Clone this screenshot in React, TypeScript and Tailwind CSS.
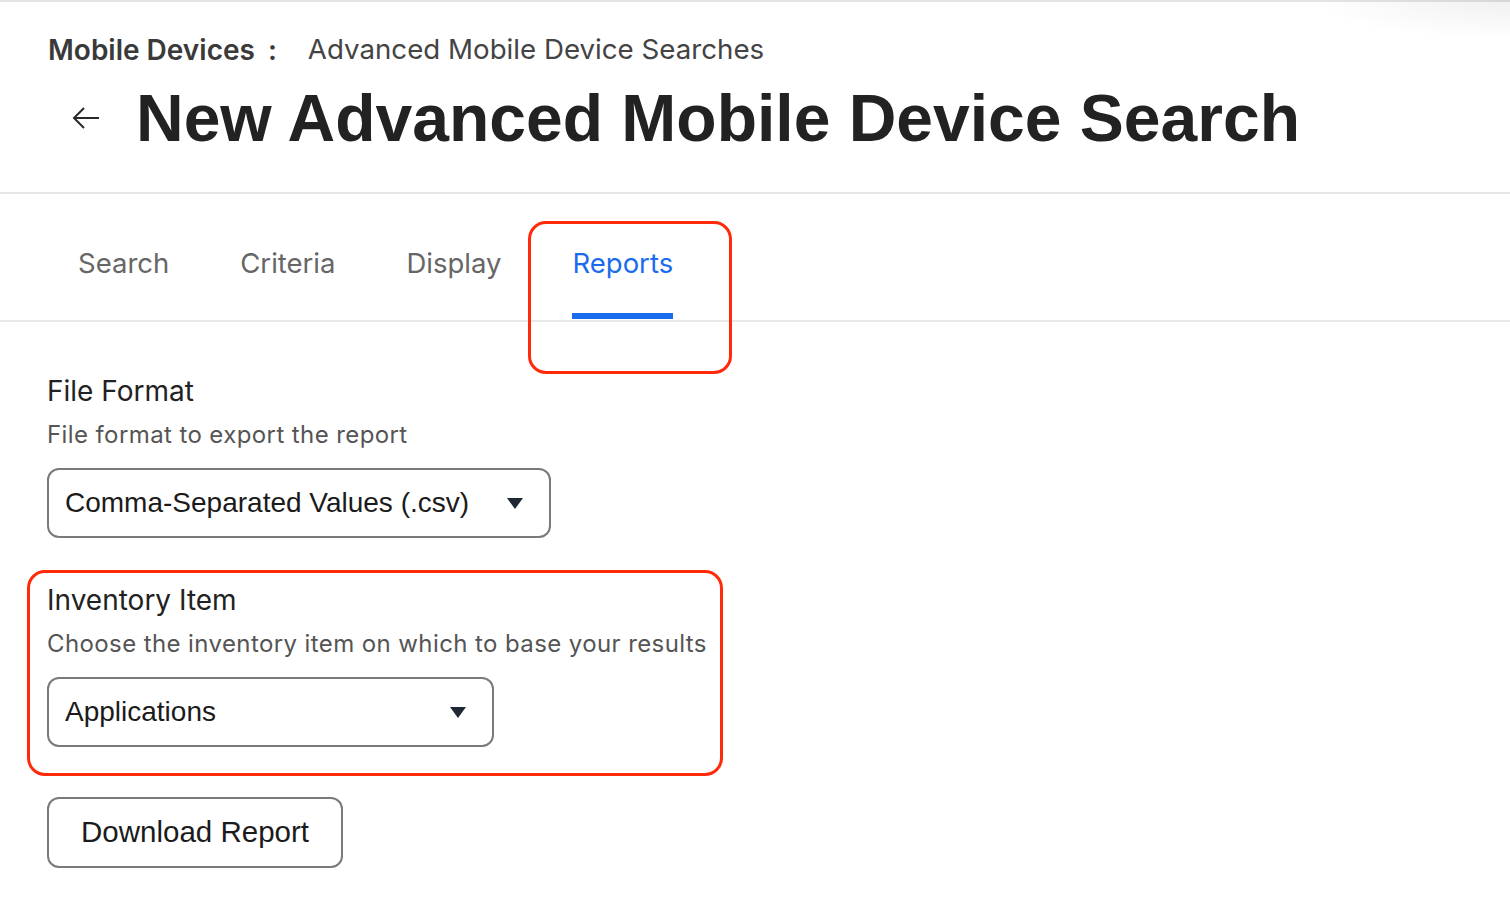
import React from "react";

const inter = "font-['Inter','Noto_Sans',sans-serif]";
const arial = "font-['Liberation_Sans',Arial,sans-serif]";

function Caret() {
  return (
    <svg width="16" height="11" viewBox="0 0 16 11" className="shrink-0">
      <polygon points="0,0 16,0 8,11" fill="#1f2733" />
    </svg>
  );
}

function Select({ value, width }: { value: string; width: string }) {
  return (
    <div
      className={`${width} h-[70px] rounded-[12px] border-2 border-[#7a7a7a] flex items-center justify-between pl-[16px] pr-[26px] bg-white`}
    >
      <span className={`${arial} text-[28px] text-[#1b1b1b]`}>{value}</span>
      <Caret />
    </div>
  );
}

export default function App() {
  return (
    <div className={`relative w-full min-h-[904px] bg-white ${inter} overflow-hidden`}>
      <div className="absolute top-0 right-0 w-[200px] h-[40px] bg-[radial-gradient(ellipse_at_top_right,rgba(0,0,0,0.06),rgba(0,0,0,0)_70%)] pointer-events-none" />
      {/* Header */}
      <div className="border-t-2 border-[#e3e3e3] border-b-2 border-b-[#e6e6e6] h-[194px]">
        <div className="pl-[48px] pt-[29px] flex items-center h-[38px] box-content text-[28px]">
          <span className="font-semibold text-[#3a3a3a]">Mobile Devices</span>
          <span className="ml-[13px] font-semibold text-[#3a3a3a]">:</span>
          <span className="ml-[31px] text-[27.7px] text-[#444]">Advanced Mobile Device Searches</span>
        </div>
        <div className="flex items-center mt-[11px] h-[76px]">
          <div className="w-[136px] flex items-center pl-[72px]">
            <svg width="28" height="24" viewBox="0 0 28 24">
              <path d="M27 12H2M12 2L2 12L12 22" fill="none" stroke="#2a2a2a" strokeWidth="2" />
            </svg>
          </div>
          <h1 className={`${arial} font-bold text-[66px] leading-none text-[#222]`}>
            New Advanced Mobile Device Search
          </h1>
        </div>
      </div>

      {/* Tabs */}
      <div className="relative border-b-2 border-[#e8e8e8] h-[128px] flex items-end pl-[78px] gap-[71px]">
        {["Search", "Criteria", "Display", "Reports"].map((t) => {
          const active = t === "Reports";
          return (
            <div key={t} className="flex flex-col items-stretch">
              <span
                className={`text-[27.5px] leading-[36px] ${active ? "text-[#1a6ced]" : "text-[#666]"}`}
              >
                {t}
              </span>
              <div className={`mt-[32px] h-[6px] mb-[1px] ${active ? "bg-[#1a6ced]" : "bg-transparent"}`} />
            </div>
          );
        })}
        <div className="absolute left-[528px] top-[27px] w-[204px] h-[153px] rounded-[18px] border-[3px] border-[#ff2a0a] pointer-events-none" />
      </div>

      {/* Content */}
      <div className="pl-[47px] pt-[51px]">
        <div className="text-[28px] leading-[36px] text-[#222]">File Format</div>
        <div className="mt-[11px] text-[24px] leading-[30px] tracking-[0.4px] text-[#555]">
          File format to export the report
        </div>
        <div className="mt-[18px]">
          <Select value="Comma-Separated Values (.csv)" width="w-[504px]" />
        </div>

        <div className="relative mt-[44px]">
          <div className="absolute -left-[20px] -top-[12px] w-[696px] h-[206px] rounded-[18px] border-[3px] border-[#ff2a0a] pointer-events-none" />
          <div className="text-[28px] leading-[36px] text-[#222]">Inventory Item</div>
          <div className="mt-[11px] text-[24px] leading-[30px] tracking-[0.4px] text-[#555]">
            Choose the inventory item on which to base your results
          </div>
          <div className="mt-[18px]">
            <Select value="Applications" width="w-[447px]" />
          </div>
        </div>

        <button className="mt-[50px] w-[296px] h-[71px] rounded-[12px] border-2 border-[#7a7a7a] bg-white flex items-center justify-center">
          <span className={`${arial} text-[29.5px] text-[#1b1b1b]`}>Download Report</span>
        </button>
      </div>
    </div>
  );
}
